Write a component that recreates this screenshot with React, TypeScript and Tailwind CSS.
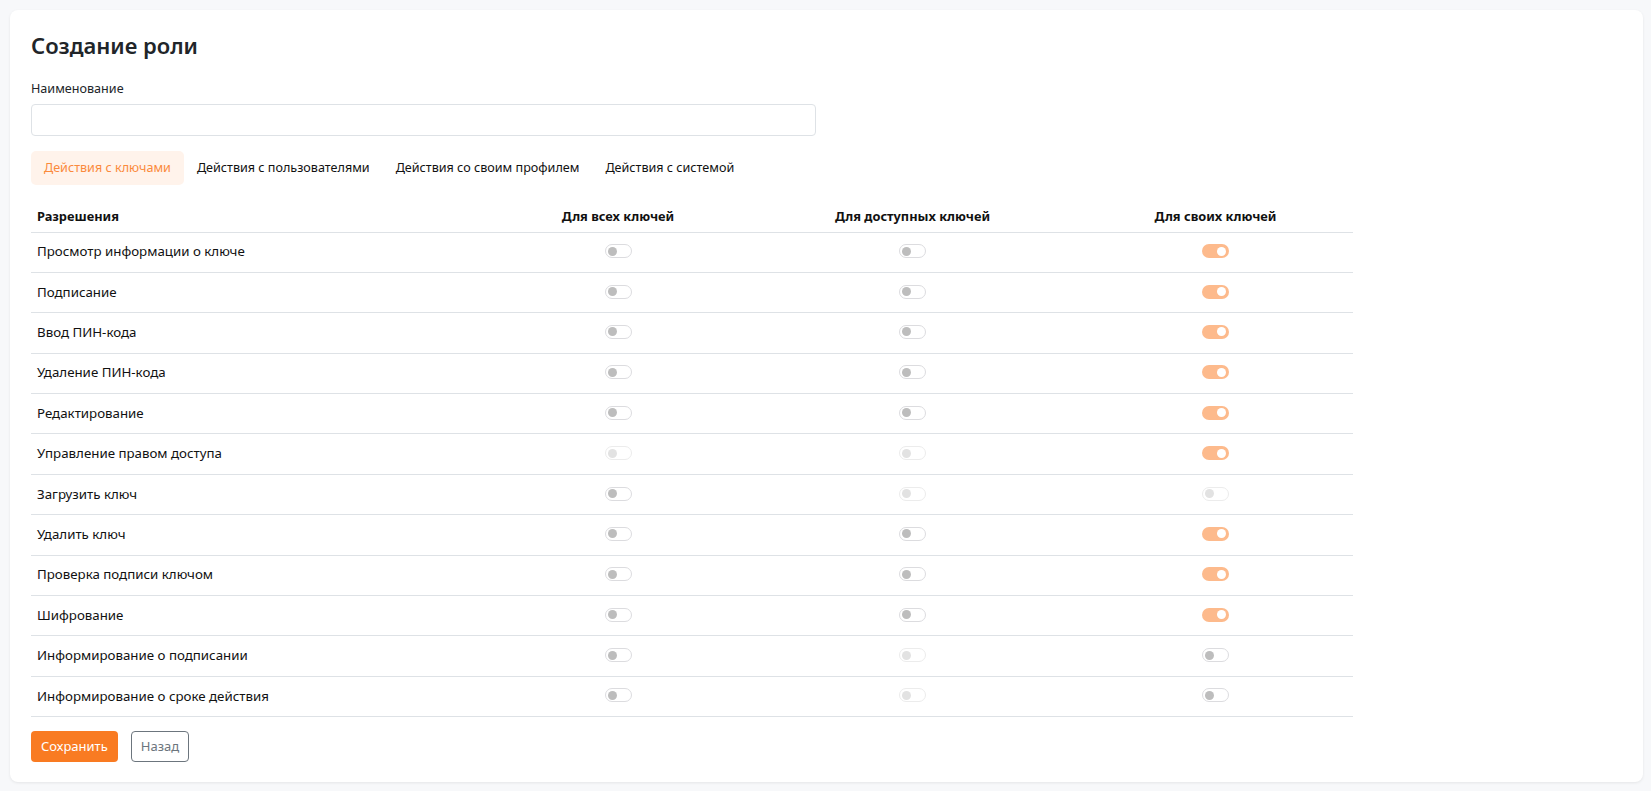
import React from "react";

type S = "off" | "on" | "dis";

const rows: { name: string; s: [S, S, S] }[] = [
  { name: "Просмотр информации о ключе", s: ["off", "off", "on"] },
  { name: "Подписание", s: ["off", "off", "on"] },
  { name: "Ввод ПИН-кода", s: ["off", "off", "on"] },
  { name: "Удаление ПИН-кода", s: ["off", "off", "on"] },
  { name: "Редактирование", s: ["off", "off", "on"] },
  { name: "Управление правом доступа", s: ["dis", "dis", "on"] },
  { name: "Загрузить ключ", s: ["off", "dis", "dis"] },
  { name: "Удалить ключ", s: ["off", "off", "on"] },
  { name: "Проверка подписи ключом", s: ["off", "off", "on"] },
  { name: "Шифрование", s: ["off", "off", "on"] },
  { name: "Информирование о подписании", s: ["off", "dis", "off"] },
  { name: "Информирование о сроке действия", s: ["off", "dis", "off"] },
];

function Toggle({ s }: { s: S }) {
  if (s === "on") {
    return (
      <span className="flex h-[14px] w-[27px] items-center justify-end rounded-full bg-[#fdba8c] pr-[3px]">
        <span className="h-[9px] w-[9px] rounded-full bg-white" />
      </span>
    );
  }
  if (s === "dis") {
    return (
      <span className="flex h-[14px] w-[27px] items-center rounded-full border border-[#ececec] bg-white pl-[2px]">
        <span className="h-[9px] w-[9px] rounded-full bg-[#e2e2e2]" />
      </span>
    );
  }
  return (
    <span className="flex h-[14px] w-[27px] items-center rounded-full border border-[#dcdcdf] bg-white pl-[2px]">
      <span className="h-[9px] w-[9px] rounded-full bg-[#bdbdbd]" />
    </span>
  );
}

export default function App() {
  return (
    <div
      className="min-h-[791px] bg-[#f7f8fa] pt-[10px] pl-[10px] pr-[8px] pb-[9px]"
      style={{ fontFamily: '"Noto Sans", "Open Sans", Arial, sans-serif' }}
    >
      <div className="h-[772px] rounded-lg bg-white px-[21px] pt-[19px] shadow-[0_1px_3px_rgba(0,0,0,0.08)]">
        <h1 className="text-[22px] font-semibold leading-[32px] text-[#212529]">Создание роли</h1>
        <div className="mt-[18px] text-[12.6px] leading-[20px] text-[#212529]">Наименование</div>
        <div className="mt-[5px] h-[32px] w-[785px] rounded-[4px] border border-[#dee2e6] bg-white" />
        <div className="mt-[15px] flex h-[34px] items-stretch text-[12.6px] text-[#111]">
          <div className="flex items-center rounded-[5px] bg-[#fff3eb] px-[13px] pt-[1px] text-[#fb8a3c]">Действия с ключами</div>
          <div className="flex items-center px-[13px] pt-[1px]">Действия с пользователями</div>
          <div className="flex items-center px-[13px] pt-[1px]">Действия со своим профилем</div>
          <div className="flex items-center px-[13px] pt-[1px]">Действия с системой</div>
        </div>
        <table className="mt-[15px] w-[1322px] table-fixed border-collapse text-[13.3px] text-[#111]">
          <colgroup>
            <col className="w-[458px]" />
            <col className="w-[258px]" />
            <col className="w-[331px]" />
            <col className="w-[275px]" />
          </colgroup>
          <thead>
            <tr className="h-[32px] border-b border-[#dee2e6] text-[12.8px]">
              <th className="px-[6px] pt-[1px] text-left font-bold">Разрешения</th>
              <th className="pt-[1px] text-center font-bold">Для всех ключей</th>
              <th className="pt-[1px] text-center font-bold">Для доступных ключей</th>
              <th className="pt-[1px] text-center font-bold">Для своих ключей</th>
            </tr>
          </thead>
          <tbody>
            {rows.map((r) => (
              <tr key={r.name} className="h-[40.4px] border-b border-[#dee2e6]">
                <td className="px-[6px]">{r.name}</td>
                {r.s.map((s, i) => (
                  <td key={i} className="p-0">
                    <div className="flex -translate-y-[1px] items-center justify-center">
                      <Toggle s={s} />
                    </div>
                  </td>
                ))}
              </tr>
            ))}
          </tbody>
        </table>
        <div className="mt-[14px] flex gap-[13px] text-[13px]">
          <button className="h-[31px] rounded-[4px] bg-[#f97b22] px-[10px] text-white">Сохранить</button>
          <button className="h-[31px] rounded-[4px] border border-[#6c757d] bg-white px-[9px] text-[#6c757d]">Назад</button>
        </div>
      </div>
    </div>
  );
}
